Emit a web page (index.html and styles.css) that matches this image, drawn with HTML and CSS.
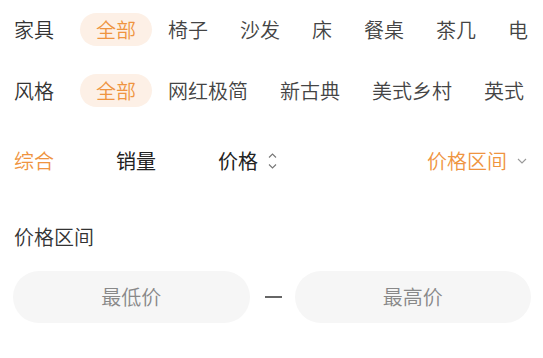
FILE: index.html
```html
<!DOCTYPE html>
<html lang="zh-CN">
<head>
    <meta charset="UTF-8">
    <meta name="viewport" content="width=device-width, initial-scale=1.0">
    <link rel="stylesheet" href="styles.css">
</head>
<body>
    <div class="panel">
        <div class="filters">
            <div class="filter-row">
                <span class="filter-label">家具</span>
                <span class="tag active">全部</span>
                <span class="tag">椅子</span>
                <span class="tag">沙发</span>
                <span class="tag">床</span>
                <span class="tag">餐桌</span>
                <span class="tag">茶几</span>
                <span class="tag">电</span>
            </div>
            <div class="filter-row">
                <span class="filter-label">风格</span>
                <span class="tag active">全部</span>
                <span class="tag">网红极简</span>
                <span class="tag">新古典</span>
                <span class="tag">美式乡村</span>
                <span class="tag">英式</span>
            </div>
        </div>

        <div class="sort-bar">
            <span class="sort-item active">综合</span>
            <span class="sort-item">销量</span>
            <span class="sort-item">价格
                <svg class="sort-icon" width="9" height="18" viewBox="0 0 9 18">
                    <path d="M1 5.5 L4.5 2 L8 5.5" fill="none" stroke="#777" stroke-width="1.1"/>
                    <path d="M1 12.5 L4.5 16 L8 12.5" fill="none" stroke="#777" stroke-width="1.1"/>
                </svg>
            </span>
            <span class="sort-range">价格区间
                <svg class="range-icon" width="10" height="6" viewBox="0 0 10 6">
                    <path d="M1 1 L5 5 L9 1" fill="none" stroke="#999" stroke-width="1.1"/>
                </svg>
            </span>
        </div>

        <div class="section-title">价格区间</div>
        <div class="price-range">
            <div class="price-input">最低价</div>
            <span class="dash"></span>
            <div class="price-input">最高价</div>
        </div>
    </div>
</body>
</html>
```

FILE: styles.css
```css
body {
    margin: 0;
    background: #ffffff;
    font-family: "Noto Sans CJK SC", "Noto Sans", sans-serif;
    font-weight: 350;
    color: #333;
    overflow: hidden;
}

.panel {
    padding: 0 12px 0 14px;
}

/* Filter rows */
.filters {
    margin-top: -1px;
}

.filter-row {
    display: flex;
    align-items: center;
    height: 61px;
    white-space: nowrap;
}

.filter-label {
    font-size: 20px;
    line-height: 28px;
    color: #333;
    margin-right: 26px;
}

.tag {
    font-size: 20px;
    line-height: 33px;
    padding: 0 16px;
    color: #444;
    border-radius: 17px;
}

.tag.active {
    background: #fdf0e6;
    color: #ef9440;
}

/* Sort bar */
.sort-bar {
    display: flex;
    align-items: center;
    height: 79px;
}

.sort-item {
    width: 102px;
    font-size: 20px;
    font-weight: 400;
    color: #222;
    display: flex;
    align-items: center;
}

.sort-item.active {
    color: #ef9440;
    font-weight: 350;
}

.sort-icon {
    margin-left: 10px;
}

.sort-range {
    margin-left: auto;
    margin-right: 4px;
    font-size: 20px;
    color: #ef9440;
    display: flex;
    align-items: center;
}

.range-icon {
    margin-left: 10px;
}

/* Price range */
.section-title {
    font-size: 20px;
    line-height: 28px;
    margin-top: 23px;
    color: #333;
}

.price-range {
    display: flex;
    align-items: center;
    margin-top: 20px;
    margin-left: -1px;
}

.price-input {
    flex: 1;
    height: 52px;
    border-radius: 26px;
    background: #f6f6f6;
    display: flex;
    align-items: center;
    justify-content: center;
    font-size: 20px;
    color: #888;
    padding-bottom: 1px;
    box-sizing: border-box;
}

.dash {
    width: 17px;
    height: 1.5px;
    background: #666;
    margin: 0 13px 0 15px;
}
```
